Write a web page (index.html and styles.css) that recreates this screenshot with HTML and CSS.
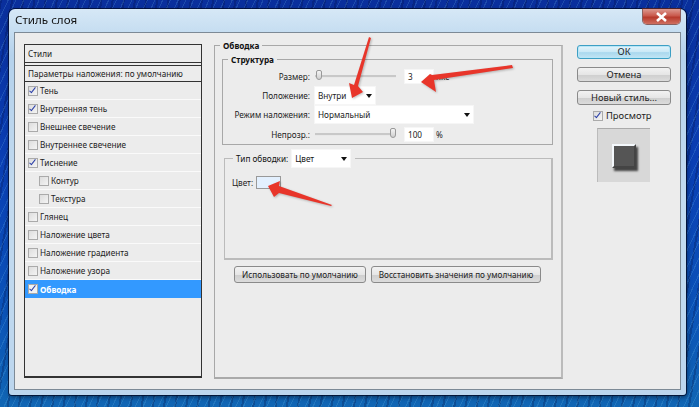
FILE: index.html
```html
<!DOCTYPE html>
<html lang="ru">
<head>
    <meta charset="UTF-8">
    <title>Стиль слоя</title>
    <link rel="stylesheet" href="styles.css">
</head>
<body>
    <div class="window">
        <div class="titlebar">
            <span class="title">Стиль слоя</span>
            <span class="close">
                <svg width="13" height="10" viewBox="0 0 13 10"><path d="M2 1 L11 9 M11 1 L2 9" stroke="#fff" stroke-width="2.6"/></svg>
            </span>
        </div>

        <div class="client">
            <!-- Список стилей -->
            <div class="styles-list">
                <div class="list-head">Стили</div>
                <div class="list-head second">Параметры наложения: по умолчанию</div>
                <div class="row"><span class="check on"></span>Тень</div>
                <div class="row"><span class="check on"></span>Внутренняя тень</div>
                <div class="row"><span class="check"></span>Внешнее свечение</div>
                <div class="row"><span class="check"></span>Внутреннее свечение</div>
                <div class="row"><span class="check on"></span>Тиснение</div>
                <div class="row sub"><span class="check"></span>Контур</div>
                <div class="row sub"><span class="check"></span>Текстура</div>
                <div class="row"><span class="check"></span>Глянец</div>
                <div class="row"><span class="check"></span>Наложение цвета</div>
                <div class="row"><span class="check"></span>Наложение градиента</div>
                <div class="row"><span class="check"></span>Наложение узора</div>
                <div class="row active"><span class="check on"></span>Обводка</div>
            </div>

            <!-- Панель настроек -->
            <div class="panel">
                <div class="group outer">
                    <div class="legend bold">Обводка</div>
                    <div class="group structure">
                        <div class="legend bold">Структура</div>
                        <div class="form-row size-row">
                            <label class="lbl">Размер:</label>
                            <div class="slider"><span class="thumb"></span></div>
                            <span class="field num">3</span>
                            <span class="unit">пкс</span>
                        </div>
                        <div class="form-row">
                            <label class="lbl">Положение:</label>
                            <div class="field select pos">Внутри<span class="caret"></span></div>
                        </div>
                        <div class="form-row">
                            <label class="lbl">Режим наложения:</label>
                            <div class="field select mode">Нормальный<span class="caret"></span></div>
                        </div>
                        <div class="form-row">
                            <label class="lbl">Непрозр.:</label>
                            <div class="slider"><span class="thumb end"></span></div>
                            <span class="field num">100</span>
                            <span class="unit">%</span>
                        </div>
                    </div>
                    <div class="group fill">
                        <div class="legend fill-legend">
                            <span>Тип обводки:</span>
                            <div class="field select kind">Цвет<span class="caret"></span></div>
                        </div>
                        <div class="color-row">
                            <span>Цвет:</span>
                            <span class="swatch"></span>
                        </div>
                    </div>
                    <div class="panel-buttons">
                        <button class="btn">Использовать по умолчанию</button>
                        <button class="btn">Восстановить значения по умолчанию</button>
                    </div>
                </div>
            </div>

            <!-- Кнопки справа -->
            <div class="side">
                <button class="btn big default">ОК</button>
                <button class="btn big">Отмена</button>
                <button class="btn big">Новый стиль...</button>
                <div class="preview-check"><span class="check on"></span>Просмотр</div>
                <div class="preview"><span class="preview-square"></span></div>
            </div>
        </div>
    </div>

    <!-- Красные стрелки поверх окна -->
    <svg class="arrows" width="699" height="407" viewBox="0 0 699 407">
        <g fill="#e8352a">
            <path d="M369 37 L371 38 L358 86 L363 92 L352 98 L349 83 L354 85 Z"/>
            <path d="M512 65 L513 68 L434 80 L436 92 L421 82 L430 74 L432 75 Z"/>
            <path d="M332 205 L331 206 L279 193 L274 197 L268 186 L280 181 L279 186 Z"/>
        </g>
    </svg>
</body>
</html>
```

FILE: styles.css
```css
html, body {
    margin: 0;
    padding: 0;
}

body {
    width: 699px;
    height: 407px;
    overflow: hidden;
    padding: 9px 13px 0 9px;
    box-sizing: border-box;
    font-family: "Noto Sans", sans-serif;
    font-size: 8.2px;
    white-space: nowrap;
    color: #222;
    background:
        repeating-linear-gradient(115deg, rgba(120, 200, 240, 0.18) 0 1px, transparent 1px 7px),
        repeating-linear-gradient(100deg, rgba(0, 10, 60, 0.25) 0 2px, transparent 2px 11px),
        linear-gradient(180deg, #0a2f9c 0%, #0a3fb4 40%, #0b52b8 75%, #1166b4 100%);
}

.window {
    height: 386px;
    box-sizing: border-box;
    padding: 0 5px 5px;
    border-radius: 6px 6px 3px 3px;
    background: linear-gradient(180deg, #d6e8f6 0%, #b5d2ec 12%, #c3dbf0 50%, #bcd6ee 100%);
    box-shadow: 0 0 0 1px rgba(0, 10, 40, 0.75), 1px 2px 5px rgba(0, 0, 0, 0.5);
    display: flex;
    flex-direction: column;
    filter: blur(0.3px);
}

.titlebar {
    height: 23px;
    flex: none;
    display: flex;
    justify-content: space-between;
}

.title {
    font-size: 11.6px;
    line-height: 22px;
    color: #111;
    padding-left: 1px;
}

.close {
    width: 37px;
    height: 15px;
    margin-right: 1px;
    display: flex;
    align-items: center;
    justify-content: center;
    border-radius: 0 0 4px 4px;
    background: linear-gradient(180deg, #dc9a90 0%, #c9594c 45%, #b73a2c 55%, #cf6f60 100%);
    box-shadow: 0 0 0 1px rgba(110, 40, 30, 0.7);
}

.client {
    flex: 1;
    display: flex;
    background: #ececec;
    border: 1px solid #7d8a96;
    padding: 11px 0 0 9px;
}

/* список слева */
.styles-list {
    width: 178px;
    height: 334px;
    box-sizing: border-box;
    border: 1px solid #333;
    border-bottom-width: 2px;
    background: #ececec;
    flex: none;
}

.list-head {
    height: 18px;
    line-height: 17px;
    padding-left: 3px;
    border-bottom: 1px solid #333;
    box-sizing: border-box;
}

.list-head.second {
    height: 17px;
    line-height: 16px;
    border-top: 1px solid #333;
    margin-top: 2px;
}

.row {
    height: 18px;
    display: flex;
    align-items: center;
    gap: 2px;
    padding-left: 3px;
    box-sizing: border-box;
    border-bottom: 1px solid #fafafa;
}

.row.sub {
    padding-left: 14px;
}

.row.active {
    background: #3399ff;
    color: #fff;
    font-weight: bold;
    border-bottom: 0;
}

.check {
    width: 10px;
    height: 10px;
    box-sizing: border-box;
    flex: none;
    position: relative;
    border: 1px solid #aaa;
    background: linear-gradient(135deg, #ddd, #f4f4f4);
}

.check.on::after {
    content: "";
    position: absolute;
    left: 2px;
    top: -1px;
    width: 2px;
    height: 6px;
    border: solid #2b3fa8;
    border-width: 0 1.5px 1.5px 0;
    transform: rotate(38deg);
}

.row.active .check {
    background: #f2f2f2;
}

/* панель */
.panel {
    width: 349px;
    margin: 1px 0 0 12px;
    flex: none;
}

.group {
    position: relative;
    box-sizing: border-box;
    border: 1px solid #a8a8a8;
}

.outer {
    height: 334px;
    border-width: 1px 2px 2px 1px;
    border-color: #a8a8a8 #bbb #aaa #a8a8a8;
    padding: 13px 7px 0 7px;
}

.legend {
    position: absolute;
    top: -6px;
    left: 5px;
    padding: 0 3px;
    line-height: 11px;
    background: #ececec;
    color: #111;
}

.bold {
    font-weight: bold;
}

.structure {
    height: 86px;
    padding-top: 8px;
    margin-right: 1px;
    border-width: 1px;
}

.form-row {
    height: 19.5px;
    display: flex;
    align-items: center;
}

.size-row {
    height: 17.5px;
}

.lbl {
    width: 87px;
    margin-right: 5px;
    text-align: right;
    flex: none;
}

.slider {
    position: relative;
    width: 81px;
    height: 2px;
    margin-right: 9px;
    background: #c8c8c8;
    border-bottom: 1px solid #e8e8e8;
    flex: none;
}

.thumb {
    position: absolute;
    top: -5px;
    left: 1px;
    width: 6px;
    height: 10px;
    box-sizing: border-box;
    border: 1px solid #999;
    border-radius: 2px 2px 3px 3px;
    background: linear-gradient(180deg, #f4f4f4, #cfcfcf);
}

.thumb.end {
    left: auto;
    right: 0;
}

.field {
    background: #fff;
    box-shadow: 0 0 0 1px #f6f6f6;
    height: 13px;
    line-height: 13px;
    box-sizing: border-box;
    padding-left: 3px;
    flex: none;
}

.num {
    width: 28px;
    margin-right: 2px;
}

.unit {
    margin-left: 1px;
}

.select {
    position: relative;
    height: 17px;
    line-height: 17px;
}

.caret {
    position: absolute;
    right: 3px;
    top: 7px;
    border: 3.5px solid transparent;
    border-top: 4px solid #111;
    border-bottom: 0;
}

.pos {
    width: 60px;
}

.mode {
    width: 158px;
}

.fill {
    height: 102px;
    margin: 13px 1px 0 2px;
    border-width: 1px 2px 2px 1px;
    border-color: #bbb;
}

.fill-legend {
    top: -9px;
    left: 8px;
    display: flex;
    align-items: center;
    gap: 4px;
    padding-right: 5px;
    line-height: 16px;
}

.kind {
    width: 58px;
}

.color-row {
    display: flex;
    align-items: center;
    gap: 3px;
    margin: 17px 0 0 7px;
}

.swatch {
    width: 25px;
    height: 13px;
    box-sizing: border-box;
    border: 1px solid #999;
    background: #e3f0fe;
}

.panel-buttons {
    display: flex;
    gap: 5px;
    margin: 6px 0 0 12px;
}

.btn {
    height: 17px;
    padding: 0;
    font-family: inherit;
    font-size: 8.2px;
    color: #222;
    border: 1px solid #8a8a8a;
    border-radius: 3px;
    background: linear-gradient(180deg, #f2f2f2 0%, #e6e6e6 50%, #cfcfcf 55%, #dcdcdc 100%);
}

.panel-buttons .btn:first-child {
    width: 132px;
}

.panel-buttons .btn:last-child {
    width: 170px;
}

/* правая колонка */
.side {
    width: 94px;
    margin: 1px 0 0 14px;
    display: flex;
    flex-direction: column;
    flex: none;
}

.btn.big {
    width: 94px;
    height: 15px;
    line-height: 12px;
    font-size: 9.4px;
    margin-bottom: 8px;
    flex: none;
}

.btn.default {
    height: 14px;
    border-color: #3d9fc4;
    box-shadow: inset 0 0 0 1px #b8e6f7;
    background: linear-gradient(180deg, #e4f4fb 0%, #c9e8f6 50%, #a9d8ee 55%, #c3e4f3 100%);
}

.preview-check {
    display: flex;
    align-items: center;
    gap: 3px;
    margin: -4px 0 0 16px;
    font-size: 9.4px;
    height: 13px;
}

.preview {
    width: 53px;
    height: 54px;
    margin: 6px 0 0 20px;
    display: flex;
    align-items: center;
    justify-content: center;
    background: #d8d8d8;
    border-top: 1px solid #aaa;
    border-left: 1px solid #bbb;
    box-sizing: border-box;
    flex: none;
}

.preview-square {
    width: 24px;
    height: 24px;
    box-sizing: border-box;
    background: #555;
    border: 2px solid;
    border-color: #f4f8fc #444 #444 #f4f8fc;
    box-shadow: 2px 3px 2px #444;
}

/* стрелки */
.arrows {
    position: absolute;
    left: 0;
    top: 0;
    filter: drop-shadow(1px 1px 1px rgba(0, 0, 0, 0.25));
}
```
